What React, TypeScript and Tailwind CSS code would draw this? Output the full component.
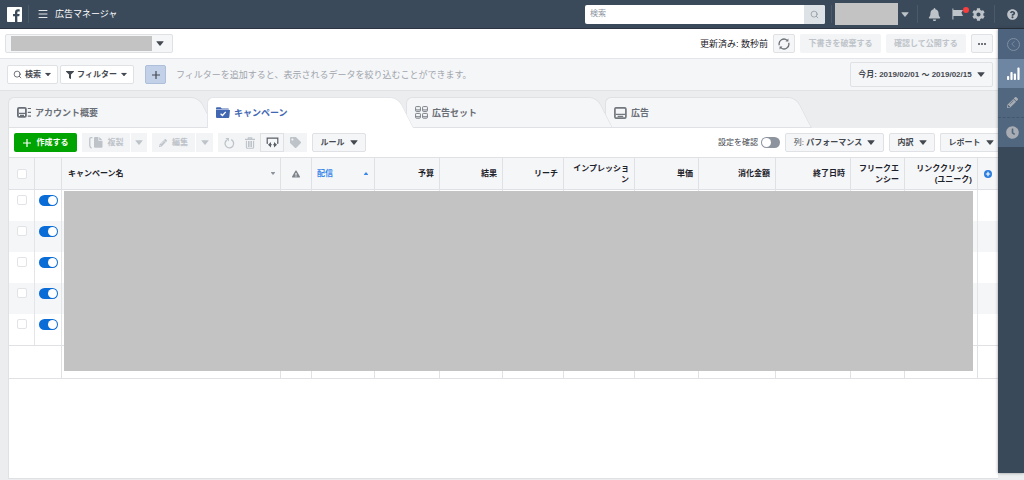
import React, { useState } from 'react'
import { FaBell, FaCog, FaQuestionCircle, FaFilter, FaTag, FaPencilAlt, FaClock, FaExclamationTriangle } from 'react-icons/fa'
import { Search, Menu, ChevronLeft } from 'lucide-react'

interface Column {
  label: React.ReactNode
  width: string
}

const METRICS: Column[] = [
  { label: '予算', width: 'w-[65px]' },
  { label: '結果', width: 'w-[63px]' },
  { label: 'リーチ', width: 'w-[61px]' },
  { label: 'インプレッション', width: 'w-[71px]' },
  { label: '単価', width: 'w-[64px]' },
  { label: '消化金額', width: 'w-[77px]' },
  { label: '終了日時', width: 'w-[75px]' },
  { label: 'フリークエンシー', width: 'w-[54px]' },
  { label: <>リンククリック<br />(ユニーク)</>, width: 'w-[73px]' },
]

const CAMPAIGNS = [1, 2, 3, 4, 5]

const BTN = 'flex items-center justify-center border border-[#dfe1e5] bg-[#f5f6f8] font-bold whitespace-nowrap'
const BTN_OFF = 'flex items-center justify-center bg-[#f2f4f6] text-[#bec3c9] font-bold whitespace-nowrap'
const CELL = 'border-r border-[#e3e5e8]'

// ─── ICONS ────────────────────────────────────────────────────
const Caret: React.FC<{ className?: string }> = ({ className = '' }) => (
  <svg viewBox="0 0 8 5" className={`w-2 h-[5px] shrink-0 ${className}`} fill="currentColor">
    <path d="M.8.2h6.4q.6.1.3.6L4.5 4.4q-.5.5-1 0L.5.8Q.2.3.8.2z" />
  </svg>
)

const Plus: React.FC<{ className?: string }> = ({ className = '' }) => (
  <svg viewBox="0 0 8 8" className={`w-2 h-2 ${className}`} stroke="currentColor" strokeWidth="1.2">
    <path d="M4 0v8M0 4h8" />
  </svg>
)

const FacebookLogo: React.FC = () => (
  <svg viewBox="0 0 24 24" className="w-[15px] h-[15px]" fill="currentColor">
    <path d="M22.676 0H1.324C.593 0 0 .593 0 1.324v21.352C0 23.408.593 24 1.324 24h11.494v-9.294H9.689v-3.621h3.129V8.41c0-3.099 1.894-4.785 4.659-4.785 1.325 0 2.464.097 2.796.141v3.24h-1.921c-1.5 0-1.792.721-1.792 1.771v2.311h3.584l-.465 3.63H16.56V24h6.115c.733 0 1.325-.592 1.325-1.324V1.324C24 .593 23.408 0 22.676 0" />
  </svg>
)

const FlagIcon: React.FC = () => (
  <svg viewBox="0 0 12 12" className="w-3 h-3" fill="currentColor">
    <path d="M.4.6h1v11h-1zM1.2 2H11L9.4 4.8 11 8H1.2z" />
  </svg>
)

const RefreshIcon: React.FC = () => (
  <svg viewBox="0 0 12 12" className="w-3 h-3" fill="none" stroke="#6d7278" strokeWidth="1.3">
    <path d="M1.3 7.2A4.8 4.8 0 0 1 9.2 2.4M10.7 4.8A4.8 4.8 0 0 1 2.8 9.6" />
    <path d="M10.4.6v2.9H7.5zM1.6 11.4V8.5h2.9z" fill="#6d7278" stroke="none" />
  </svg>
)

const UndoIcon: React.FC = () => (
  <svg viewBox="0 0 11 12" className="w-[11px] h-3" fill="none" stroke="currentColor" strokeWidth="1.3">
    <path d="M7.2 2.7a4.3 4.3 0 1 1-4.4.4" />
    <path d="M1.4.9h3.5v3.5z" fill="currentColor" stroke="none" />
  </svg>
)

const TrashIcon: React.FC = () => (
  <svg viewBox="0 0 10 12" className="w-[10px] h-3" fill="none" stroke="currentColor" strokeWidth="1.1">
    <path d="M0 2.4h10M3.3 2V.9h3.4V2M1.4 3.8v6.4q0 1 1 1h5.2q1 0 1-1V3.8M3.5 4v6M5 4v6M6.5 4v6" />
  </svg>
)

const AccountIcon: React.FC = () => (
  <svg viewBox="0 0 14 11" className="w-[14px] h-[11px]" fill="none" stroke="#6a6f77">
    <rect x=".9" y=".9" width="8" height="9" rx="1.2" strokeWidth="1.8" />
    <path d="M2 6.4h6M3 8.3h4" strokeWidth="1.3" />
    <path d="M10.8 1.5H14M10.8 5.3H14M10.8 9.2H14" strokeWidth="1.2" />
  </svg>
)

const CampaignIcon: React.FC = () => (
  <svg viewBox="0 0 14 11" className="w-[14px] h-[11px]">
    <path d="M0 1.2Q0 .2 1 .2h3.6l1.2 1.4H12q1 0 1 1H0zM0 2.9h14l-.7 7.1q-.1.9-1 .9H1q-1 0-1-1z" fill="#4267b2" />
    <path d="M4.6 6.7l1.9 1.8 3.2-3.6" fill="none" stroke="#fff" strokeWidth="1.3" />
  </svg>
)

const AdSetIcon: React.FC = () => (
  <svg viewBox="0 0 13 13" className="w-[13px] h-[13px]" fill="none" stroke="#7b8087">
    <rect x=".6" y=".6" width="4.8" height="4.8" rx=".7" />
    <rect x="7.6" y=".6" width="4.8" height="4.8" rx=".7" />
    <rect x=".6" y="7.4" width="4.8" height="4.8" rx=".7" />
    <rect x="7.6" y="7.4" width="4.8" height="4.8" rx=".7" />
    <path d="M.6 3.9h4.8M7.6 3.9h4.8M.6 10.7h4.8M7.6 10.7h4.8" />
  </svg>
)

const AdIcon: React.FC = () => (
  <svg viewBox="0 0 13 12" className="w-[13px] h-3" fill="none" stroke="#74797f">
    <rect x=".9" y=".8" width="11" height="10.4" rx="1.4" strokeWidth="1.7" />
    <path d="M1.6 7.4h9.8M3.6 9.3h5.6" strokeWidth="1.3" />
  </svg>
)

const CopyIcon: React.FC = () => (
  <svg viewBox="0 0 14 12" className="w-[14px] h-3">
    <path d="M3.4.7H2Q.8.7.8 2v6.6q0 1.9 1.8 2.5" fill="none" stroke="#bec3c9" strokeWidth="1.3" />
    <path d="M5 1q0-1 1-1h3.4v3.2q0 .8.8.8h3.3v5.8q0 1-1 1H6q-1 0-1-1zM10.2 0l3.3 3.3h-3.3z" fill="#bec3c9" />
  </svg>
)

const AbTestIcon: React.FC = () => (
  <svg viewBox="0 0 13 12" className="w-[13px] h-3">
    <path d="M2 6.2H1.2V1.2h10.6v5h-.8" fill="none" stroke="#5a5f66" strokeWidth="1.2" />
    <path d="M3.4 7.8h2.4M7.2 7.8h2.4" stroke="#5a5f66" strokeWidth="1.1" />
    <path d="M5 5v5.6L2 7.8zM8 5v5.6l3-2.8z" fill="#5a5f66" />
  </svg>
)

const BarsIcon: React.FC = () => (
  <svg viewBox="0 0 13 13" className="w-[13px] h-[13px]" fill="#fff">
    <rect x="0" y="9" width="2.2" height="4" rx=".8" />
    <rect x="3.4" y="5" width="2.2" height="8" rx=".8" />
    <rect x="6.8" y="6.5" width="2.2" height="6.5" rx=".8" />
    <rect x="10.4" y=".6" width="2.2" height="12.4" rx=".8" />
  </svg>
)

// ─── CONTROLS ─────────────────────────────────────────────────
const Toggle: React.FC<{ label: string; id?: string; initial?: boolean }> = ({ label, id, initial = false }) => {
  const [on, setOn] = useState(initial)
  return (
    <input
      id={id}
      type="checkbox"
      role="switch"
      aria-label={label}
      checked={on}
      onChange={e => setOn(e.target.checked)}
      className="appearance-none block shrink-0 w-[19px] h-[11px] p-px rounded-full bg-[#8d949e] checked:bg-[#0a6cd6] before:block before:w-[9px] before:h-[9px] before:rounded-full before:bg-white checked:before:ml-2"
    />
  )
}

const Tick: React.FC<{ label: string }> = ({ label }) => (
  <input
    type="checkbox"
    aria-label={label}
    className="appearance-none block w-[10px] h-[10px] ml-2 rounded-[2px] border border-[#e1e3e6] bg-white checked:bg-[#0a6cd6]"
  />
)

interface TabProps {
  icon: React.ReactNode
  label: string
  order: string
  active: boolean
  onClick: () => void
}

const Tab: React.FC<TabProps> = ({ icon, label, order, active, onClick }) => {
  const fill = active ? 'bg-white border-[#e3e5e8]' : 'bg-[#f5f6f8] border-[#dfe1e4]'
  return (
    <button
      role="tab"
      aria-selected={active}
      onClick={onClick}
      className={`relative w-[199px] h-[31px] pl-[9px] text-left ${active ? 'z-10 text-[#4267b2]' : `${order} text-[#6a6f77]`}`}
    >
      {/* slanted right edge, then the straight left half over it */}
      <span className={`absolute inset-y-0 left-10 -right-2 origin-bottom skew-x-[27deg] rounded-tr-[8px] border-t border-r ${fill} ${active ? '' : 'border-b'}`} />
      <span className={`absolute inset-y-0 left-0 right-10 rounded-tl-[6px] border-t border-l ${fill} ${active ? '' : 'border-b'}`} />
      <span className="relative flex items-center gap-1 text-[9px] font-bold">
        {icon}
        {label}
      </span>
    </button>
  )
}

// ─── HEADER ───────────────────────────────────────────────────
const Header: React.FC = () => (
  <header className="flex items-center h-[29px] pr-[6px] bg-[#3b4a5b] border-b border-[#2b3440] text-[#bec3c9]">
    <a href="#" aria-label="Facebook" className="ml-[7px] text-white"><FacebookLogo /></a>
    <span className="w-px h-[18px] ml-[6px] bg-[#4b5968]" />
    <button aria-label="メニュー" className="ml-2 text-[#e4e7ea]"><Menu size={12} strokeWidth={2} /></button>
    <h1 className="ml-[6px] text-[9px] text-white">広告マネージャ</h1>

    <form className="flex ml-auto h-[19px] w-[240px] rounded-[2px] overflow-hidden bg-white" onSubmit={e => e.preventDefault()}>
      <input aria-label="検索" placeholder="検索" className="flex-1 min-w-0 px-[5px] text-[8px] text-[#1d2129] placeholder:text-[#8d949e] outline-none" />
      <button aria-label="検索する" className="flex items-center justify-center w-[21px] bg-[#dde2e6] text-[#8d949e]"><Search size={9} /></button>
    </form>
    <span className="w-px h-[18px] ml-[6px] mr-[3px] bg-[#4b5968]" />
    <button aria-label="アカウント" className="flex items-center gap-[3px]">
      <span className="w-[63px] h-[22px] bg-[#c3c3c3]" />
      <Caret />
    </button>
    <span className="w-px h-[18px] ml-2 mr-[10px] bg-[#4b5968]" />
    <button aria-label="お知らせ"><FaBell size={13} /></button>
    <button aria-label="ページ" className="relative ml-[11px]">
      <FlagIcon />
      <span className="absolute -top-px -right-[5px] w-[6px] h-[6px] rounded-full bg-[#fa3e3e]" />
    </button>
    <button aria-label="設定" className="ml-2"><FaCog size={13} /></button>
    <span className="w-px h-[18px] ml-[9px] mr-3 bg-[#4b5968]" />
    <button aria-label="ヘルプ"><FaQuestionCircle size={11} /></button>
  </header>
)

// ─── ACCOUNT + FILTER BARS ────────────────────────────────────
const AccountBar: React.FC = () => (
  <div className="flex items-center gap-[5px] h-[30px] px-[5px] bg-white border-b border-[#e3e5e8]">
    <div className="relative w-[168px] h-[19px]">
      <select aria-label="広告アカウント" className="appearance-none block w-full h-full rounded-[2px] border border-[#dfe1e5] bg-[#f5f6f8]">
        <option aria-label="広告アカウント" />
      </select>
      <span className="pointer-events-none absolute inset-0 flex items-center gap-1 pl-[6px] text-[#444950]">
        <span className="w-[141px] h-[15px] bg-[#c3c3c3]" />
        <Caret />
      </span>
    </div>
    <span className="ml-auto text-[9px] text-[#1d2129]">更新済み: 数秒前</span>
    <button aria-label="更新" className={`${BTN} w-[22px] h-[19px] rounded-[2px]`}><RefreshIcon /></button>
    <button disabled className={`${BTN_OFF} w-[81px] h-[19px] rounded-[2px]`}>下書きを破棄する</button>
    <button disabled className={`${BTN_OFF} w-[80px] h-[19px] rounded-[2px]`}>確認して公開する</button>
    <button aria-label="その他" className={`${BTN} w-[22px] h-[19px] gap-px rounded-[2px]`}>
      <i className="w-[2px] h-[2px] rounded-full bg-[#444950]" />
      <i className="w-[2px] h-[2px] rounded-full bg-[#444950]" />
      <i className="w-[2px] h-[2px] rounded-full bg-[#444950]" />
    </button>
  </div>
)

const FilterBar: React.FC = () => (
  <div className="flex items-center h-8 pl-[7px] pr-[5px] bg-[#f5f6f8] border-b border-[#e0e2e5]">
    <button className="flex items-center justify-center gap-[3px] w-[51px] h-[19px] rounded-[2px] border border-[#dfe1e5] bg-white font-bold">
      <Search size={9} />検索<Caret className="scale-75" />
    </button>
    <button className="flex items-center justify-center gap-[3px] w-[74px] h-[19px] ml-[2px] rounded-[2px] border border-[#dfe1e5] bg-white font-bold">
      <FaFilter size={8} />フィルター<Caret className="scale-75" />
    </button>
    <button aria-label="フィルターを追加" className="flex items-center justify-center w-[21px] h-[19px] ml-[11px] rounded-[2px] border border-[#aebfdc] bg-[#c3d1e8]">
      <Plus />
    </button>
    <p className="ml-[10px] text-[9px] text-[#a0a5ac]">フィルターを追加すると、表示されるデータを絞り込むことができます。</p>
    <button className={`${BTN} gap-[5px] w-[143px] h-[25px] ml-auto rounded-[2px]`}>
      今月: 2019/02/01 ～ 2019/02/15<Caret />
    </button>
  </div>
)

// ─── TOOLBAR ──────────────────────────────────────────────────
const Toolbar: React.FC = () => (
  <div className="flex items-center gap-[5px] h-[29px] pl-[5px]">
    <button className="flex items-center justify-center gap-[6px] w-[63px] h-[19px] rounded-[2px] bg-[#00a400] text-white font-bold">
      <Plus />作成する
    </button>
    <div className="flex gap-px">
      <button disabled className={`${BTN_OFF} gap-[5px] w-[48px] h-[19px]`}><CopyIcon />複製</button>
      <button disabled aria-label="複製オプション" className={`${BTN_OFF} w-4 h-[19px]`}><Caret /></button>
    </div>
    <div className="flex gap-px">
      <button disabled className={`${BTN_OFF} gap-[5px] w-[43px] h-[19px]`}><FaPencilAlt size={8} />編集</button>
      <button disabled aria-label="編集オプション" className={`${BTN_OFF} w-[17px] h-[19px]`}><Caret /></button>
    </div>
    <div className="flex">
      <button disabled aria-label="元に戻す" className={`${BTN_OFF} w-[22px] h-[19px]`}><UndoIcon /></button>
      <button disabled aria-label="削除" className={`${BTN_OFF} w-5 h-[19px]`}><TrashIcon /></button>
      <button aria-label="A/Bテスト" className={`${BTN} w-6 h-[19px]`}><AbTestIcon /></button>
      <button disabled aria-label="タグ" className={`${BTN_OFF} w-[23px] h-[19px]`}><FaTag size={11} /></button>
    </div>
    <button className={`${BTN} gap-[5px] w-[54px] h-[19px] rounded-[2px]`}>ルール<Caret /></button>

    <label htmlFor="review" className="ml-auto -mr-[2px]">設定を確認</label>
    <Toggle id="review" label="設定を確認" />
    <button className={`${BTN} gap-[5px] w-[99px] h-[19px] rounded-[2px]`}>
      <span><span className="font-normal">列:</span> パフォーマンス</span><Caret />
    </button>
    <button className={`${BTN} gap-[5px] w-[46px] h-[19px] rounded-[2px]`}>内訳<Caret /></button>
    <button className={`${BTN} gap-[5px] w-[58px] h-[19px] rounded-l-[2px] border-r-0 pl-[3px]`}>レポート<Caret /></button>
  </div>
)

// ─── TABLE ────────────────────────────────────────────────────
const CampaignTable: React.FC = () => (
  <div className="relative">
    <table className="w-full table-fixed border-separate border-spacing-0 leading-[11px] text-[#1d2129]">
      <thead className="bg-[#f5f6f8]">
        <tr className="h-[33px] [&>th]:border-y [&>th]:border-[#dfe1e4]">
          <th className={`${CELL} w-[26px]`}><Tick label="すべて選択" /></th>
          <th className={`${CELL} w-[27px]`} aria-label="オン/オフ" />
          <th className={`${CELL} pl-[6px] pr-[3px]`}>
            <span className="flex items-center justify-between">キャンペーン名<Caret className="scale-60 text-[#8d949e]" /></span>
          </th>
          <th className={`${CELL} w-[31px] text-[#7f848b]`} aria-label="エラー"><FaExclamationTriangle size={8} className="mx-auto" /></th>
          <th className={`${CELL} w-[63px] pl-[5px] pr-[4px] text-[#3b88ea]`}>
            <span className="flex items-center justify-between">配信<Caret className="scale-60 rotate-180" /></span>
          </th>
          {METRICS.map((m, i) => (
            <th key={i} className={`${CELL} ${m.width} px-[5px] text-right`}>{m.label}</th>
          ))}
          <th className="w-5">
            <button aria-label="列を追加" className="block mx-auto">
              <svg viewBox="0 0 8 8" className="w-2 h-2">
                <circle cx="4" cy="4" r="4" fill="#2a7de1" />
                <path d="M4 1.8v4.4M1.8 4h4.4" stroke="#fff" strokeWidth="1.2" />
              </svg>
            </button>
          </th>
        </tr>
      </thead>
      <tbody>
        {CAMPAIGNS.map(c => (
          <tr key={c} className="h-[31px] align-top even:bg-[#f5f6f8]">
            <td className={`${CELL} pt-[5px]`}><Tick label={`キャンペーン ${c} を選択`} /></td>
            <td className={`${CELL} pt-[5px] pl-1`}><Toggle label={`キャンペーン ${c}`} initial /></td>
            <td className={CELL} />
            <td className={CELL} />
            <td className={CELL} />
            {METRICS.map((_, i) => <td key={i} className={CELL} />)}
            <td />
          </tr>
        ))}
      </tbody>
      <tfoot>
        <tr className="h-[34px] [&>td]:border-y [&>td]:border-[#dfe1e4]">
          <td colSpan={2} className={CELL} />
          <td className={CELL} />
          <td className={CELL} />
          <td className={CELL} />
          {METRICS.map((_, i) => <td key={i} className={CELL} />)}
          <td />
        </tr>
      </tfoot>
    </table>
    {/* redacted campaign data */}
    <div className="absolute top-[34px] bottom-2 left-[55px] right-[25px] bg-[#c3c3c3]" />
  </div>
)

// ─── SIDE RAIL ────────────────────────────────────────────────
const SideRail: React.FC = () => (
  <nav className="w-[26px] shrink-0 mb-[7px] bg-[#3a4959] shadow-[0_0_3px_rgba(0,0,0,0.4)] z-20">
    <button aria-label="開く" className="flex items-center justify-center w-full h-[30px] pl-1 bg-[#4e647e] text-[#7f8fa3]">
      <span className="flex items-center justify-center w-[13px] h-[13px] rounded-full border border-current"><ChevronLeft size={10} className="-ml-px" /></span>
    </button>
    <button aria-label="グラフ" className="flex items-center justify-center w-full h-[29px] pl-1 bg-[#6f86a3]"><BarsIcon /></button>
    <button aria-label="編集" className="flex items-center justify-center w-full h-[30px] pl-[3px] bg-[#51677f] border-b border-dashed border-[#435870] text-[#a9adb3]"><FaPencilAlt size={11} /></button>
    <button aria-label="履歴" className="flex items-center justify-center w-full h-[29px] pl-[3px] bg-[#51677f] text-[#a9adb3]"><FaClock size={13} /></button>
  </nav>
)

export default function App() {
  const [tab, setTab] = useState(1)

  return (
    <div className="flex flex-col min-h-screen bg-[#ebedef] text-[8px] leading-3 text-[#444950] font-['Liberation_Sans','Noto_Sans_CJK_JP',sans-serif]">
      <Header />
      <div className="flex flex-1">
        <main className="flex flex-col flex-1 min-w-0">
          <AccountBar />
          <FilterBar />
          <div role="tablist" className="flex mt-[6px] pl-2">
            <Tab icon={<AccountIcon />} label="アカウント概要" order="z-[4]" active={tab === 0} onClick={() => setTab(0)} />
            <Tab icon={<CampaignIcon />} label="キャンペーン" order="z-[3]" active={tab === 1} onClick={() => setTab(1)} />
            <Tab icon={<AdSetIcon />} label="広告セット" order="z-[2]" active={tab === 2} onClick={() => setTab(2)} />
            <Tab icon={<AdIcon />} label="広告" order="z-[1]" active={tab === 3} onClick={() => setTab(3)} />
          </div>
          <section className="flex-1 mb-px ml-2 bg-white border-l border-b border-[#dfe1e4]">
            <Toolbar />
            <CampaignTable />
          </section>
        </main>
        <SideRail />
      </div>
    </div>
  )
}
